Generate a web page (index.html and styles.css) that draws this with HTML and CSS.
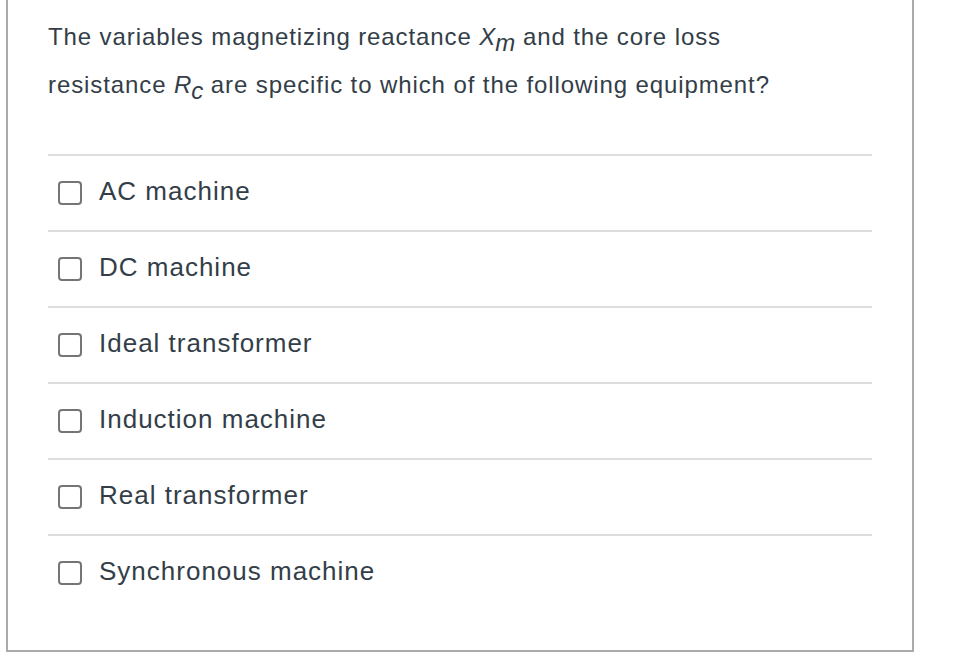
FILE: index.html
```
<!DOCTYPE html>
<html>
<head>
<meta charset="utf-8">
<link rel="stylesheet" href="styles.css">
</head>
<body>
<div class="card">
  <p class="question">The variables magnetizing reactance <span class="var">X<sub>m</sub></span> and the core loss resistance <span class="var">R<sub>c</sub></span> are specific to which of the following equipment?</p>
  <ul class="options">
    <li class="option"><span class="box"></span><span class="label">AC machine</span></li>
    <li class="option"><span class="box"></span><span class="label">DC machine</span></li>
    <li class="option"><span class="box"></span><span class="label">Ideal transformer</span></li>
    <li class="option"><span class="box"></span><span class="label">Induction machine</span></li>
    <li class="option"><span class="box"></span><span class="label">Real transformer</span></li>
    <li class="option"><span class="box"></span><span class="label">Synchronous machine</span></li>
  </ul>
</div>
</body>
</html>
```
FILE: styles.css
```
html, body {
  margin: 0;
  padding: 0;
  background: #fff;
}
body {
  font-family: "Liberation Sans", Arial, sans-serif;
  color: #333e48;
}
.card {
  box-sizing: border-box;
  margin-left: 6px;
  width: 908px;
  height: 652px;
  border: 2px solid #aaaaaa;
  border-top: none;
  padding: 13px 40px 0 40px;
}
.question {
  margin: 0;
  width: 760px;
  font-size: 24px;
  letter-spacing: 0.9px;
  line-height: 48px;
}
.var {
  font-style: italic;
  letter-spacing: 0;
}
.var sub {
  font-size: 24px;
  line-height: 0;
  vertical-align: -6px;
}
.options {
  list-style: none;
  margin: 45px 0 0 0;
  padding: 0;
}
.option {
  display: flex;
  align-items: center;
  height: 74px;
  border-top: 2px solid #dddddd;
  padding-left: 10px;
}
.label {
  font-size: 26px;
  letter-spacing: 1px;
  margin-top: -4px;
}
.box {
  box-sizing: border-box;
  width: 24px;
  height: 24px;
  border: 2px solid #757575;
  border-radius: 4px;
  margin-right: 17px;
  flex: none;
}
```
